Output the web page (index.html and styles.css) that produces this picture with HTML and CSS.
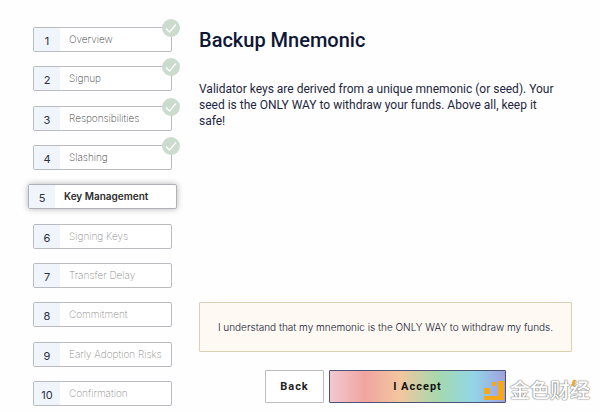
FILE: index.html
```html
<!DOCTYPE html>
<html lang="en">
<head>
<meta charset="utf-8">
<meta name="viewport" content="width=device-width, initial-scale=1">
<title>Backup Mnemonic</title>
<link rel="stylesheet" href="styles.css">
</head>
<body>
<div class="page">
	<ol class="steps">
		<li class="step done"><span class="num">1</span><span class="name">Overview</span><svg class="check" viewBox="0 0 18 18"><circle cx="9" cy="9" r="9"/><path d="M4 9.5l3.500 3.500 6.500-7.500"/></svg></li>
		<li class="step done"><span class="num">2</span><span class="name">Signup</span><svg class="check" viewBox="0 0 18 18"><circle cx="9" cy="9" r="9"/><path d="M4 9.5l3.500 3.500 6.500-7.500"/></svg></li>
		<li class="step done"><span class="num">3</span><span class="name">Responsibilities</span><svg class="check" viewBox="0 0 18 18"><circle cx="9" cy="9" r="9"/><path d="M4 9.5l3.500 3.500 6.500-7.500"/></svg></li>
		<li class="step done"><span class="num">4</span><span class="name">Slashing</span><svg class="check" viewBox="0 0 18 18"><circle cx="9" cy="9" r="9"/><path d="M4 9.5l3.500 3.500 6.500-7.500"/></svg></li>
		<li class="step active" aria-current="step"><span class="num">5</span><span class="name">Key Management</span></li>
		<li class="step"><span class="num">6</span><span class="name">Signing Keys</span></li>
		<li class="step"><span class="num">7</span><span class="name">Transfer Delay</span></li>
		<li class="step"><span class="num">8</span><span class="name">Commitment</span></li>
		<li class="step"><span class="num">9</span><span class="name">Early Adoption Risks</span></li>
		<li class="step"><span class="num">10</span><span class="name">Confirmation</span></li>
	</ol>
	<main class="content">
		<h1>Backup Mnemonic</h1>
		<p class="intro">Validator keys are derived from a unique mnemonic (or seed). Your seed is the ONLY WAY to withdraw your funds. Above all, keep it safe!</p>
		<p class="notice">I understand that my mnemonic is the ONLY WAY to withdraw my funds.</p>
		<div class="buttons">
			<button class="btn back" type="button">Back</button>
			<button class="btn accept" type="button">I Accept</button>
		</div>
	</main>
</div>
<div class="mark">
	<svg class="logo" viewBox="0 0 22 21"><path d="M9 2h4v4H9zM1 8h6v6H1zM15 1h6v19H1v-4h14z"/></svg>
	<span class="brand">金色财经</span>
	<svg class="spark" viewBox="0 0 5 7"><path d="M2 0h3L3 6H0z"/></svg>
</div>
</body>
</html>
```

FILE: styles.css
```css
*{margin:0;padding:0;box-sizing:border-box;}
body{background:#fefefe;font-family:Inter,"Liberation Sans",sans-serif;color:#1d2640;}
.page{display:flex;min-height:100vh;}

/* steps */
.steps{flex:none;width:139px;margin-left:33px;padding:27px 0 6px;list-style:none;display:flex;flex-direction:column;justify-content:space-between;}
.step{position:relative;display:flex;height:25px;border:1px solid #b9bbc1;border-radius:2px;background:#fff;font-size:10px;line-height:22px;}
.num{flex:none;width:26px;background:#f0f4fb;text-align:center;font-size:11px;line-height:26px;color:#2b3044;}
.name{padding-left:9px;font-weight:200;color:#909090;white-space:nowrap;}
.done .name{color:#404040;}
.active{margin:0 -5px;border-color:#b0b0b8;box-shadow:0 0 6px rgba(0,0,0,.3);}
.active .name{font-weight:600;color:#2b2b2b;}
.check{position:absolute;top:-9px;right:-9px;width:18px;height:18px;}
.check circle{fill:#cbdccf;}
.check path{fill:none;stroke:#fff;stroke-width:1.2;}

/* right side */
.content{flex:1;display:flex;flex-direction:column;padding:28px 28px 9px 27px;}
h1{font:500 20px/24px Roboto,sans-serif;color:#0f1734;}
.intro{margin-top:29px;padding-right:10px;font:12px/16px Roboto,sans-serif;}
.notice{margin-top:auto;padding:15px 10px;border:1px solid #dccfb4;border-radius:1px;background:#fef9f2;text-align:center;font-size:10px;line-height:18px;font-weight:300;color:#0f1734;}
.buttons{display:flex;justify-content:center;gap:5px;margin-top:18px;}
.btn{height:33px;border:1px solid #bcbcc0;border-radius:1px;background:#fff;font:bold 11px Roboto,sans-serif;letter-spacing:1px;color:#222;cursor:pointer;}
.back{width:59px;}
.accept{width:177px;border-color:#4c5176;background:linear-gradient(90deg,#f3c8d2,#f0a5a0 20%,#f3c69f 40%,#a5d9ae 62%,#93d5e6 82%,#a0a2df);color:#111;}

/* watermark over the page corner */
.mark{position:absolute;right:10px;bottom:10px;display:flex;gap:5px;align-items:center;height:24px;}
.logo{width:22px;height:21px;fill:#f5a81c;}
.brand{font:500 20px/24px "Noto Sans CJK SC",sans-serif;color:#fff;text-shadow:0 0 1px #777,0 0 1px #888,0 0 2px #999;}
.spark{position:absolute;top:2px;right:14px;width:5px;height:7px;fill:#e8a93a;}
```
